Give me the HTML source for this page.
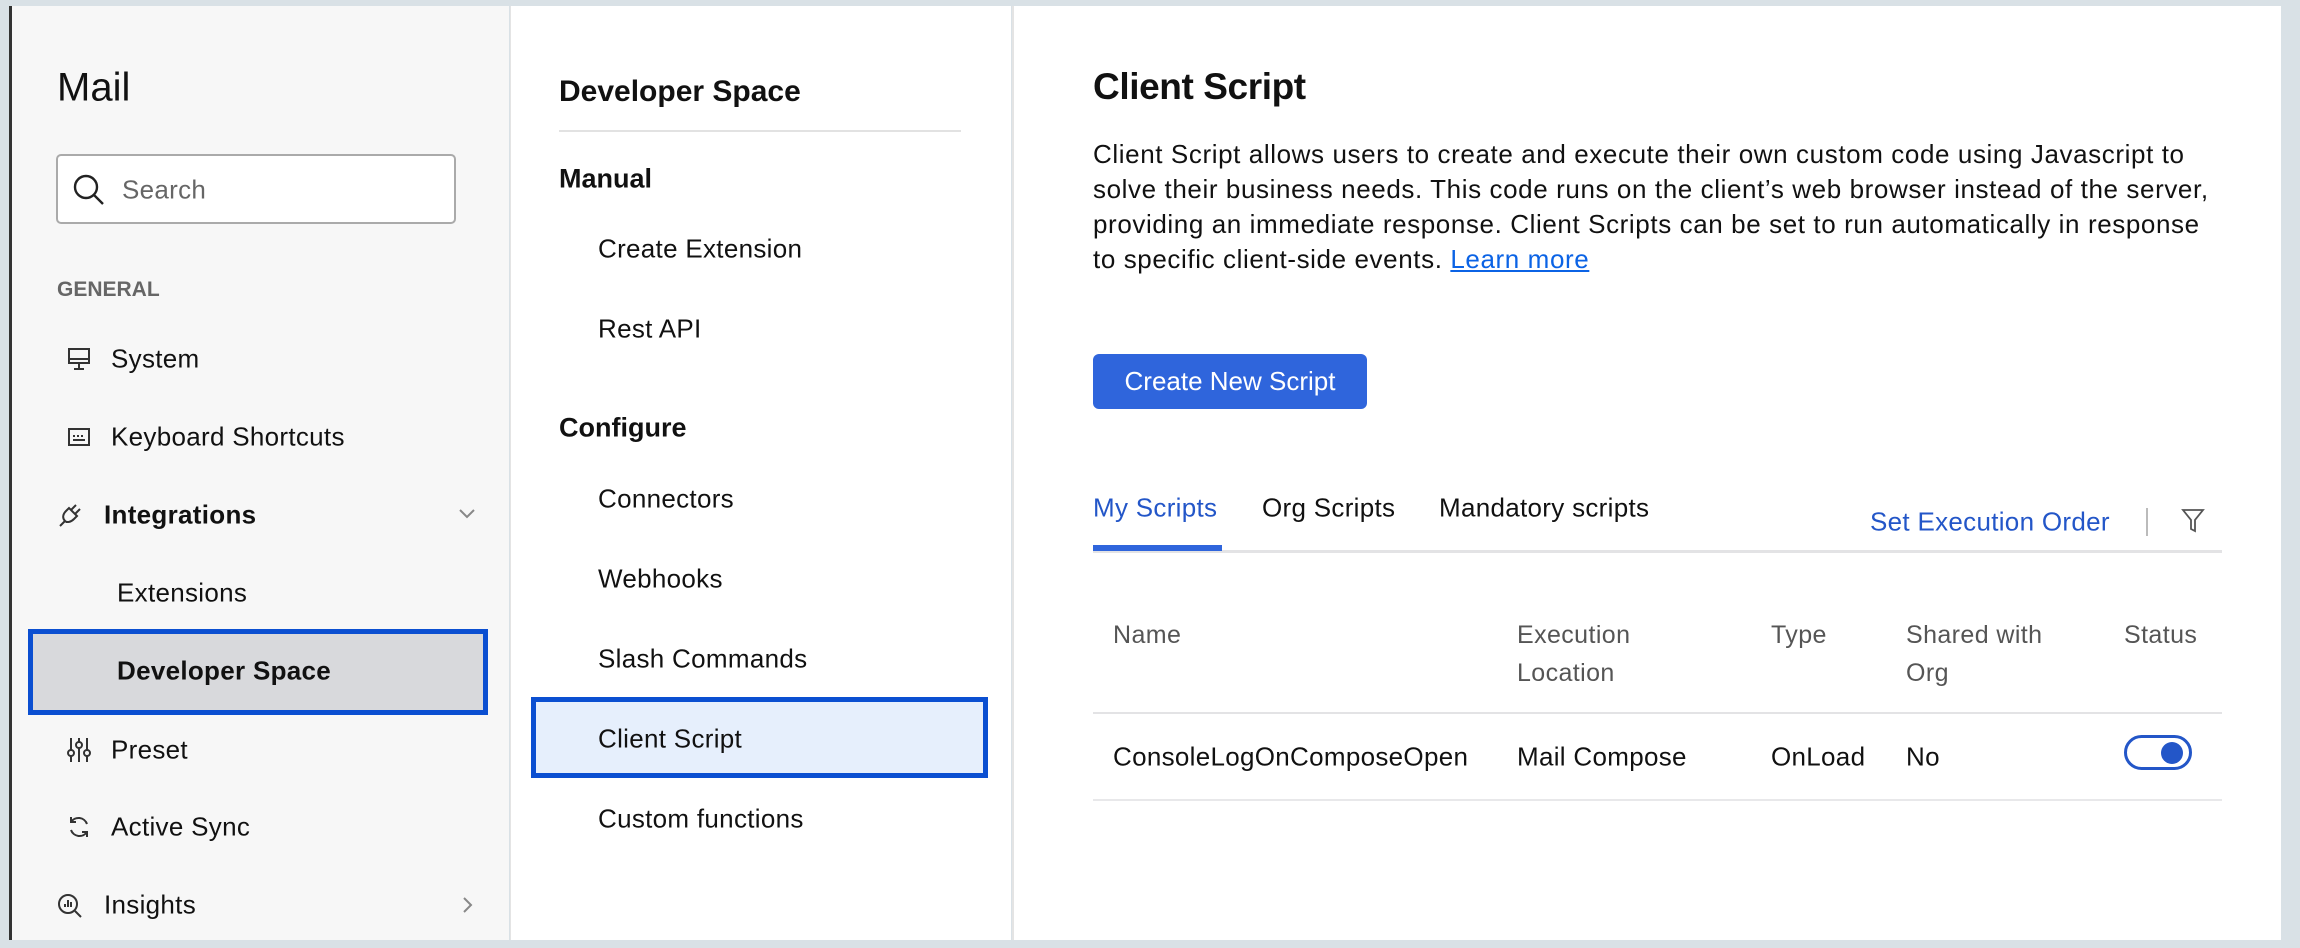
<!DOCTYPE html>
<html><head><meta charset="utf-8"><style>
*{margin:0;padding:0;box-sizing:border-box}
body{width:2300px;height:948px;background:#d9e1e6;font-family:"Liberation Sans",sans-serif;color:#111;position:relative;overflow:hidden}
.a{position:absolute;white-space:nowrap}
.t{transform:translateY(-50%)}
#s1{position:absolute;left:9px;top:6px;width:500px;height:934px;background:#f7f7f7;border-left:3px solid #333}
#s2{position:absolute;left:510px;top:6px;width:501px;height:934px;background:#fff;border-left:1px solid #e4e4e4}
#m{position:absolute;left:1012px;top:6px;width:1269px;height:934px;background:#fff;border-left:2px solid #e4e4e4}
.it{font-size:26px;letter-spacing:0.3px}
.h{font-size:25px;line-height:38px;color:#555;letter-spacing:0.4px}
svg{position:absolute}
</style></head><body>
<div id="s1"></div><div id="s2"></div><div id="m"></div>

<div class="a t" style="left:57px;top:88px;font-size:40px;letter-spacing:0px">Mail</div>
<div class="a" style="left:56px;top:154px;width:400px;height:70px;border:2px solid #aaa;border-radius:5px;background:#fff"></div>
<svg style="left:72px;top:173px" width="34" height="34" viewBox="0 0 34 34" fill="none" stroke="#222" stroke-width="2.4"><circle cx="14" cy="14" r="11"/><path d="M22 22l9 9"/></svg>
<div class="a t it" style="left:122px;top:190px;color:#666">Search</div>
<div class="a t" style="left:57px;top:290px;font-size:21px;font-weight:bold;color:#666">GENERAL</div>

<svg style="left:66px;top:346px" width="26" height="26" viewBox="0 0 26 26" fill="none" stroke="#333" stroke-width="2"><rect x="3" y="3" width="20" height="14"/><path d="M3 13h20M13 17v5M8 23h10"/></svg>
<div class="a t it" style="left:111px;top:359px">System</div>
<svg style="left:66px;top:426px" width="26" height="24" viewBox="0 0 26 24" fill="none" stroke="#333" stroke-width="2"><rect x="3" y="3" width="20" height="16"/><path d="M7 14h12M7 10h2M11 10h2M15 10h2"/></svg>
<div class="a t it" style="left:111px;top:437px">Keyboard Shortcuts</div>
<svg style="left:56px;top:501px" width="28" height="28" viewBox="0 0 28 28" fill="none" stroke="#333" stroke-width="2"><path d="M4 25l5-5M9 20c-3-3-2-7 1-10l3-3 8 8-3 3c-3 3-7 4-9 2zM15 9l5-5M19 13l5-5"/></svg>
<div class="a t it" style="left:104px;top:515px;font-weight:bold">Integrations</div>
<svg style="left:458px;top:507px" width="18" height="14" viewBox="0 0 18 14" fill="none" stroke="#888" stroke-width="2"><path d="M2 3l7 7 7-7"/></svg>
<div class="a t it" style="left:117px;top:593px">Extensions</div>
<div class="a" style="left:28px;top:629px;width:460px;height:86px;background:#d8d9dc;border:5px solid #0b4fd1"></div>
<div class="a t it" style="left:117px;top:671px;font-weight:bold">Developer Space</div>
<svg style="left:66px;top:736px" width="26" height="28" viewBox="0 0 26 28" fill="none" stroke="#333" stroke-width="2"><path d="M5 2v24M13 2v24M21 2v24"/><circle cx="5" cy="17" r="3" fill="#f7f7f7"/><circle cx="13" cy="9" r="3" fill="#f7f7f7"/><circle cx="21" cy="17" r="3" fill="#f7f7f7"/></svg>
<div class="a t it" style="left:111px;top:750px">Preset</div>
<svg style="left:66px;top:814px" width="26" height="26" viewBox="0 0 26 26" fill="none" stroke="#333" stroke-width="2"><path d="M21 10A9 9 0 0 0 5 8M5 16a9 9 0 0 0 16 2M5 3v5h5M21 23v-5h-5"/></svg>
<div class="a t it" style="left:111px;top:827px">Active Sync</div>
<svg style="left:56px;top:892px" width="28" height="28" viewBox="0 0 28 28" fill="none" stroke="#333" stroke-width="2"><circle cx="12" cy="12" r="9"/><path d="M19 19l6 6M9 15v-3M12 15V8M15 15v-5"/></svg>
<div class="a t it" style="left:104px;top:905px">Insights</div>
<svg style="left:461px;top:896px" width="14" height="18" viewBox="0 0 14 18" fill="none" stroke="#888" stroke-width="2"><path d="M3 2l7 7-7 7"/></svg>

<div class="a t" style="left:559px;top:92px;font-size:30px;font-weight:bold;letter-spacing:0px">Developer Space</div>
<div class="a" style="left:559px;top:130px;width:402px;height:2px;background:#e2e2e2"></div>
<div class="a t" style="left:559px;top:179px;font-size:27px;font-weight:bold;letter-spacing:0px">Manual</div>
<div class="a t it" style="left:598px;top:249px">Create Extension</div>
<div class="a t it" style="left:598px;top:329px">Rest API</div>
<div class="a t" style="left:559px;top:428px;font-size:27px;font-weight:bold;letter-spacing:0px">Configure</div>
<div class="a t it" style="left:598px;top:499px">Connectors</div>
<div class="a t it" style="left:598px;top:579px">Webhooks</div>
<div class="a t it" style="left:598px;top:659px">Slash Commands</div>
<div class="a" style="left:531px;top:697px;width:457px;height:81px;background:#e6effc;border:5px solid #0b4fd1"></div>
<div class="a t it" style="left:598px;top:739px">Client Script</div>
<div class="a t it" style="left:598px;top:819px">Custom functions</div>

<div class="a t" style="left:1093px;top:87px;font-size:37px;font-weight:bold;letter-spacing:-0.4px">Client Script</div>
<div class="a" style="left:1093px;top:137px;font-size:26px;line-height:35px;letter-spacing:0.6px;color:#111">Client Script allows users to create and execute their own custom code using Javascript to<br>solve their business needs. This code runs on the client’s web browser instead of the server,<br>providing an immediate response. Client Scripts can be set to run automatically in response<br>to specific client-side events. <span style="color:#0b63e5;text-decoration:underline">Learn more</span></div>
<div class="a" style="left:1093px;top:354px;width:274px;height:55px;background:#2f65dc;border-radius:6px;color:#fff;font-size:26px;letter-spacing:0px;text-align:center;line-height:55px">Create New Script</div>

<div class="a t it" style="left:1093px;top:508px;color:#2356c8">My Scripts</div>
<div class="a t it" style="left:1262px;top:508px">Org Scripts</div>
<div class="a t it" style="left:1439px;top:508px">Mandatory scripts</div>
<div class="a" style="left:1093px;top:550px;width:1129px;height:3px;background:#e3e3e5"></div>
<div class="a" style="left:1093px;top:545px;width:129px;height:6px;background:#2f65dc"></div>
<div class="a t it" style="left:1870px;top:522px;color:#2356c8">Set Execution Order</div>
<div class="a" style="left:2146px;top:508px;width:2px;height:28px;background:#bbb"></div>
<svg style="left:2181px;top:508px" width="24" height="26" viewBox="0 0 24 26" fill="none" stroke="#555" stroke-width="1.8"><path d="M2 2h20l-8 10v11l-4-2v-9z"/></svg>

<div class="a h" style="left:1113px;top:616px">Name</div>
<div class="a h" style="left:1517px;top:616px">Execution<br>Location</div>
<div class="a h" style="left:1771px;top:616px">Type</div>
<div class="a h" style="left:1906px;top:616px">Shared with<br>Org</div>
<div class="a h" style="left:2124px;top:616px">Status</div>
<div class="a" style="left:1093px;top:712px;width:1129px;height:2px;background:#e3e3e5"></div>
<div class="a t it" style="left:1113px;top:757px">ConsoleLogOnComposeOpen</div>
<div class="a t it" style="left:1517px;top:757px">Mail Compose</div>
<div class="a t it" style="left:1771px;top:757px">OnLoad</div>
<div class="a t it" style="left:1906px;top:757px">No</div>
<div class="a" style="left:2124px;top:735px;width:68px;height:35px;border:3px solid #2356c8;border-radius:18px;background:#fff"></div>
<div class="a" style="left:2161px;top:742px;width:22px;height:22px;border-radius:50%;background:#2356c8"></div>
<div class="a" style="left:1093px;top:799px;width:1129px;height:2px;background:#e8e8ea"></div>
</body></html>
